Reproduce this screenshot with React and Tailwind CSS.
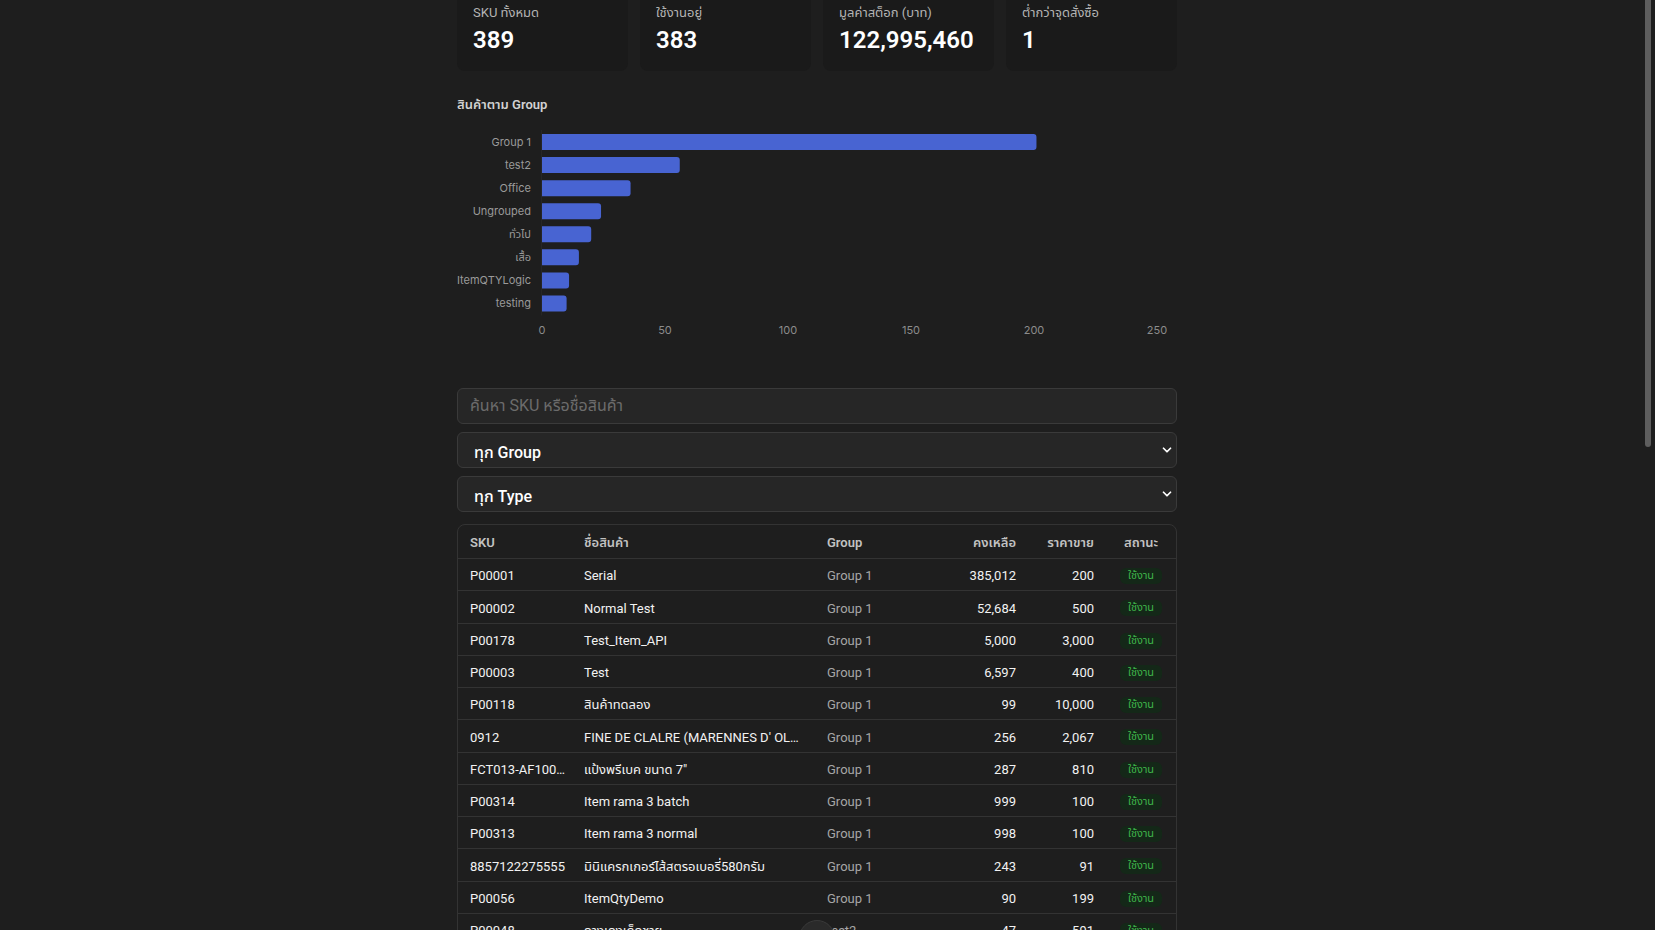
import { ChevronDown } from 'lucide-react'

const stats = [
  { label: 'SKU ทั้งหมด', value: '389' },
  { label: 'ใช้งานอยู่', value: '383' },
  { label: 'มูลค่าสต็อก (บาท)', value: '122,995,460' },
  { label: 'ต่ำกว่าจุดสั่งซื้อ', value: '1' },
]

const groups = [
  { name: 'Group 1', count: 201 },
  { name: 'test2', count: 56 },
  { name: 'Office', count: 36 },
  { name: 'Ungrouped', count: 24 },
  { name: 'ทั่วไป', count: 20 },
  { name: 'เสื้อ', count: 15 },
  { name: 'ItemQTYLogic', count: 11 },
  { name: 'testing', count: 10 },
]

const items = [
  ['P00001', 'Serial', 'Group 1', '385,012', '200'],
  ['P00002', 'Normal Test', 'Group 1', '52,684', '500'],
  ['P00178', 'Test_Item_API', 'Group 1', '5,000', '3,000'],
  ['P00003', 'Test', 'Group 1', '6,597', '400'],
  ['P00118', 'สินค้าทดลอง', 'Group 1', '99', '10,000'],
  ['0912', "FINE DE CLALRE (MARENNES D' OLÉRON) N°3", 'Group 1', '256', '2,067'],
  ['FCT013-AF1001-7', 'แป้งพรีเบค ขนาด 7"', 'Group 1', '287', '810'],
  ['P00314', 'Item rama 3 batch', 'Group 1', '999', '100'],
  ['P00313', 'Item rama 3 normal', 'Group 1', '998', '100'],
  ['8857122275555', 'มินิแครกเกอร์ไส้สตรอเบอรี่580กรัม', 'Group 1', '243', '91'],
  ['P00056', 'ItemQtyDemo', 'Group 1', '90', '199'],
  ['P00048', 'กางเกงเด็กชาย', 'test2', '47', '591'],
  ['P00049', 'กางเกงเด็กหญิง', 'test2', '52', '591'],
  ['P00050', 'เสื้อยืดคอกลม', 'test2', '120', '250'],
  ['P00051', 'เสื้อโปโล', 'test2', '88', '390'],
  ['P00052', 'หมวกแก๊ป', 'test2', '64', '199'],
  ['P00060', 'ปากกาลูกลื่น', 'Office', '1,200', '12'],
  ['P00061', 'กระดาษ A4', 'Office', '340', '125'],
  ['P00062', 'แฟ้มเอกสาร', 'Office', '215', '45'],
  ['P00063', 'ลวดเย็บกระดาษ', 'Office', '500', '20'],
  ['P00070', 'สินค้าไม่ระบุกลุ่ม', 'Ungrouped', '30', '150'],
  ['P00071', 'Sample Item A', 'Ungrouped', '18', '80'],
  ['P00080', 'น้ำดื่ม 600ml', 'ทั่วไป', '2,400', '7'],
  ['P00081', 'ทิชชู่ม้วน', 'ทั่วไป', '360', '15'],
  ['P00090', 'เสื้อเชิ้ตแขนยาว', 'เสื้อ', '42', '590'],
  ['P00091', 'เสื้อแจ็คเก็ต', 'เสื้อ', '25', '1,290'],
  ['P00100', 'QtyLogic Item 1', 'ItemQTYLogic', '100', '50'],
  ['P00101', 'QtyLogic Item 2', 'ItemQTYLogic', '75', '60'],
  ['P00110', 'testing item', 'testing', '10', '10'],
  ['P00111', 'testing item 2', 'testing', '5', '20'],
  ['P00120', 'สินค้าตัวอย่าง', 'Group 1', '66', '320'],
  ['P00121', 'Demo Product', 'Group 1', '14', '1,500'],
  ['P00122', 'Batch Item', 'Group 1', '410', '75'],
  ['P00123', 'Serial Item B', 'Group 1', '9', '2,400'],
  ['P00124', 'ชุดทดสอบ', 'Group 1', '33', '450'],
  ['P00125', 'Normal Item C', 'Group 1', '150', '99'],
  ['P00126', 'สินค้าใหม่', 'Group 1', '27', '680'],
  ['P00127', 'Item Z', 'Group 1', '3', '5,000'],
]

// chart geometry
const X0 = 85
const PX_PER_UNIT = 2.46
const ROW = 23.07
const TOP = 22
const ticks = [0, 50, 100, 150, 200, 250]

function GroupChart() {
  return (
    <svg width="720" height="230" className="block" style={{ fontFamily: 'Inter, "Noto Sans Thai", "Noto Sans", sans-serif' }}>
      <line x1={X0 - 0.5} y1={TOP - 12} x2={X0 - 0.5} y2={TOP + ROW * 7 + 12} stroke="#262626" />
      {groups.map((g, i) => {
        const cy = TOP + i * ROW
        const w = g.count * PX_PER_UNIT
        return (
          <g key={g.name}>
            <text x={X0 - 11} y={cy + 4} textAnchor="end" fontSize="11" fill="#9a9a9a">
              {g.name}
            </text>
            <path
              d={`M${X0} ${cy - 8} H${X0 + w - 3} a3 3 0 0 1 3 3 V${cy + 5} a3 3 0 0 1 -3 3 H${X0} Z`}
              fill="#4864d2"
            />
          </g>
        )
      })}
      {ticks.map((t) => (
        <text key={t} x={X0 + t * PX_PER_UNIT} y={214} textAnchor="middle" fontSize="11" fill="#8c8c8c">
          {t}
        </text>
      ))}
    </svg>
  )
}

function Select({ label }) {
  return (
    <div className="flex h-9 items-center justify-between rounded-md border border-[#3a3a3a] bg-[#262626] pl-4 pr-[2px]">
      <span className="pt-[5px] text-base leading-5 font-medium text-white">{label}</span>
      <ChevronDown className="h-[14px] w-[14px] text-white" strokeWidth={3} />
    </div>
  )
}

const cols = 'grid grid-cols-[114px_243px_120px_93px_78px_1fr]'

export default function App() {
  return (
    <div className="flex h-screen bg-[#1e1e1e] font-['Roboto','Noto_Sans_Thai','Noto_Sans',sans-serif] text-white">
      <div className="flex-1 overflow-y-auto pr-[6px] [scrollbar-width:none]">
        <div className="mx-auto -mt-[13px] max-w-[720px] pb-10">
          {/* summary cards */}
          <div className="grid grid-cols-4 gap-3">
            {stats.map((s) => (
              <div key={s.label} className="rounded-lg bg-[#1a1a1a] px-4 pt-4 pb-[14px]">
                <div className="text-[13px] leading-5 text-[#b4b4b4]">{s.label}</div>
                <div className="text-[24px] leading-[34px] font-semibold">{s.value}</div>
              </div>
            ))}
          </div>

          {/* products per group */}
          <h2 className="mt-6 text-[13px] leading-5 font-semibold text-[#d2d2d2]">สินค้าตาม Group</h2>
          <div className="mt-[5px]">
            <GroupChart />
          </div>

          {/* filters */}
          <div className="mt-[38px] space-y-2">
            <div className="flex h-9 items-center rounded-md border border-[#3a3a3a] bg-[#262626] px-3">
              <span className="text-base text-[#6c6c6c]">ค้นหา SKU หรือชื่อสินค้า</span>
            </div>
            <Select label="ทุก Group" />
            <Select label="ทุก Type" />
          </div>

          {/* items table */}
          <div className="mt-3 overflow-hidden rounded-lg border border-[#333333] text-[13px]">
            <div className={`${cols} h-[34px] items-center border-b border-[#333333] pt-[2px] font-semibold text-[#c2c2c2]`}>
              <div className="px-3">SKU</div>
              <div className="px-3">ชื่อสินค้า</div>
              <div className="px-3">Group</div>
              <div className="px-3 text-right">คงเหลือ</div>
              <div className="px-3 text-right">ราคาขาย</div>
              <div className="px-3 text-center">สถานะ</div>
            </div>
            {items.map(([sku, name, group, stock, price]) => (
              <div key={sku} className={`${cols} h-[32.25px] items-center border-b border-[#333333] pt-[3px] text-[#f2f2f2] last:border-b-0`}>
                <div className="truncate pr-[3px] pl-3">{sku}</div>
                <div className="truncate px-3">{name}</div>
                <div className="truncate px-3 text-[#a6a6a6]">{group}</div>
                <div className="px-3 text-right">{stock}</div>
                <div className="px-3 text-right">{price}</div>
                <div className="flex justify-center">
                  <span className="rounded-md bg-[#142818] px-2 text-[11px] leading-4 text-[#3fb44a]">ใช้งาน</span>
                </div>
              </div>
            ))}
          </div>
        </div>
      </div>

      {/* scrollbar track */}
      <div className="flex w-[15px] shrink-0 justify-center">
        <div className="h-[447px] w-[6px] rounded-b-full bg-[#5e5e5e]" />
      </div>

      {/* floating action button, mostly below the fold */}
      <button className="fixed bottom-[-26px] left-[799px] h-9 w-9 rounded-full border border-[#3a3a3a] bg-[#2a2a2a]" />
    </div>
  )
}
